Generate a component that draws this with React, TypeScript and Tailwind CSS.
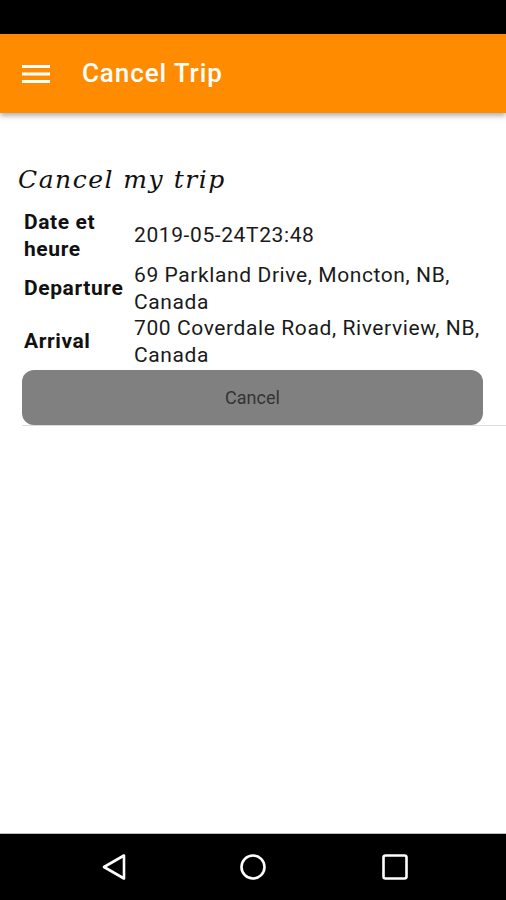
import React from "react";

const trip = [
  { label: ["Date et", "heure"], value: ["2019-05-24T23:48"] },
  { label: ["Departure"], value: ["69 Parkland Drive, Moncton, NB,", "Canada"] },
  { label: ["Arrival"], value: ["700 Coverdale Road, Riverview, NB,", "Canada"] },
];

function NavBar() {
  return (
    <div className="h-[67px] bg-black border-t border-[#bdbdbd] flex items-center">
      <svg width="28" height="28" viewBox="0 0 28 28" className="ml-[100px]">
        <path
          d="M24 2.5 L4 14 L24 25.5 Z"
          fill="none"
          stroke="white"
          strokeWidth="2.6"
          strokeLinejoin="round"
        />
      </svg>
      <svg width="28" height="28" viewBox="0 0 28 28" className="ml-[111px]">
        <circle cx="14" cy="14" r="11.5" fill="none" stroke="white" strokeWidth="2.6" />
      </svg>
      <svg width="28" height="28" viewBox="0 0 28 28" className="ml-[114px]">
        <rect x="2.5" y="2.5" width="23" height="23" rx="2" fill="none" stroke="white" strokeWidth="2.6" />
      </svg>
    </div>
  );
}

export default function App() {
  return (
    <div className="w-[506px] h-[900px] flex flex-col bg-white overflow-hidden font-['Roboto',sans-serif]">
      <div className="h-[34px] bg-black" />
      <div className="h-[79px] bg-[#ff8c00] flex items-center px-[22px] relative z-10 shadow-[0_3px_5px_rgba(0,0,0,0.3)]">
        <svg width="28" height="20" viewBox="0 0 28 20">
          <rect x="0" y="1" width="28" height="3" fill="white" />
          <rect x="0" y="8.5" width="28" height="3" fill="white" />
          <rect x="0" y="16" width="28" height="3" fill="white" />
        </svg>
        <span className="ml-[32px] text-white text-[26px] font-medium tracking-[0.9px]">Cancel Trip</span>
      </div>
      <div className="flex-1">
        <h1 className="mt-[52px] ml-[18px] text-[25px] leading-[30px] italic tracking-[1.5px] text-[#111] font-['DejaVu_Serif',serif]">
          Cancel my trip
        </h1>
        <div className="mt-[14px] ml-[22px] border-b border-[#dcdcdc]">
          <div className="pl-[2px] pr-[22px]">
            {trip.map((row) => (
              <div key={row.label[0]} className="flex items-center text-[21px] leading-[26.5px] tracking-[0.6px]">
                <div className="w-[110px] font-bold text-[#111]">
                  {row.label.map((l) => (
                    <div key={l}>{l}</div>
                  ))}
                </div>
                <div className="text-[#1a1a1a]">
                  {row.value.map((v) => (
                    <div key={v}>{v}</div>
                  ))}
                </div>
              </div>
            ))}
          </div>
          <div className="pr-[22px] pt-[2px]">
            <button className="w-[461px] h-[55px] rounded-[12px] bg-[#808080] text-[18px] text-[#333] flex items-center justify-center">
              Cancel
            </button>
          </div>
        </div>
      </div>
      <NavBar />
    </div>
  );
}
